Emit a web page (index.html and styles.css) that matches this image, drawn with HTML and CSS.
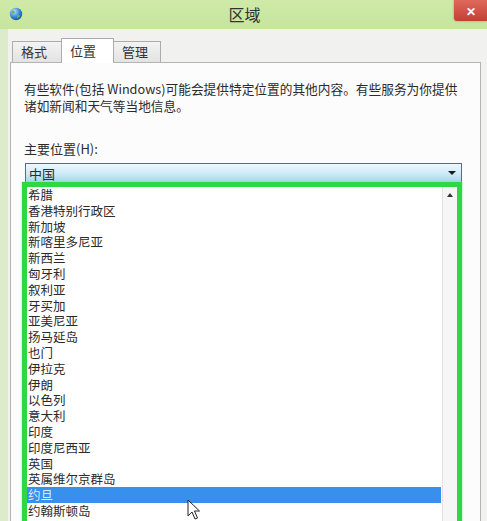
FILE: index.html
```html
<!DOCTYPE html>
<html lang="zh-CN">
<head>
    <meta charset="UTF-8">
    <meta name="viewport" content="width=device-width, initial-scale=1.0">
    <title>区域</title>
    <link rel="stylesheet" href="styles.css">
</head>
<body>
    <div class="window">
        <div class="titlebar">
            <svg class="app-icon" width="14" height="14" viewBox="0 0 14 14">
                <defs>
                    <radialGradient id="g" cx="0.35" cy="0.3" r="0.8">
                        <stop offset="0" stop-color="#bfe3ff"/>
                        <stop offset="0.6" stop-color="#2f7fd0"/>
                        <stop offset="1" stop-color="#1a4f95"/>
                    </radialGradient>
                </defs>
                <circle cx="7" cy="7" r="6.2" fill="url(#g)"/>
                <path d="M3 4 Q5 3 6 5 Q5 7 3 7 Z" fill="#5cb85c"/>
                <path d="M8 8 Q10 7 11 9 Q10 11 8 11 Z" fill="#5cb85c"/>
            </svg>
            <div class="title">区域</div>
            <div class="close">✕</div>
        </div>

        <div class="content">
            <div class="tabs">
                <div class="tab">格式</div>
                <div class="tab active">位置</div>
                <div class="tab">管理</div>
            </div>

            <div class="panel">
                <p class="desc">有些软件(包括 Windows)可能会提供特定位置的其他内容。有些服务为你提供诸如新闻和天气等当地信息。</p>

                <div class="label">主要位置(H):</div>

                <div class="combo">
                    <span>中国</span>
                    <span class="combo-arrow"></span>
                </div>

                <div class="listbox">
                    <ul class="items">
                        <li>希腊</li>
                        <li>香港特别行政区</li>
                        <li>新加坡</li>
                        <li>新喀里多尼亚</li>
                        <li>新西兰</li>
                        <li>匈牙利</li>
                        <li>叙利亚</li>
                        <li>牙买加</li>
                        <li>亚美尼亚</li>
                        <li>扬马延岛</li>
                        <li>也门</li>
                        <li>伊拉克</li>
                        <li>伊朗</li>
                        <li>以色列</li>
                        <li>意大利</li>
                        <li>印度</li>
                        <li>印度尼西亚</li>
                        <li>英国</li>
                        <li>英属维尔京群岛</li>
                        <li class="selected">约旦</li>
                        <li>约翰斯顿岛</li>
                    </ul>
                    <div class="scrollbar">
                        <span class="scroll-up"></span>
                    </div>
                </div>
            </div>
        </div>

        <svg class="cursor" width="13" height="21" viewBox="0 0 13 21">
            <path d="M1 1 L1 17 L5 13 L8 20 L10.5 19 L7.5 12 L12.5 12 Z" fill="#fff" stroke="#222" stroke-width="1" stroke-linejoin="round"/>
        </svg>
    </div>
</body>
</html>
```

FILE: styles.css
```css
* {
    margin: 0;
    padding: 0;
    box-sizing: border-box;
}

body {
    width: 487px;
    height: 521px;
    overflow: hidden;
    background: #f0f0f0;
    font-family: "Noto Sans CJK SC", "Microsoft YaHei", sans-serif;
    color: #2b2b2b;
}

.window {
    position: relative;
    height: 521px;
    border-left: 8px solid #dcecca;
    background: #f1f1f0;
}

.titlebar {
    height: 29px;
    margin-left: -8px;
    background: linear-gradient(#cfeaa8, #c6e59c);
    display: flex;
    align-items: flex-start;
}

.app-icon {
    margin: 7px 0 0 9px;
}

.title {
    flex: 1;
    text-align: center;
    font-size: 16px;
    line-height: 29px;
    color: #333;
    padding-left: 12px;
}

.close {
    width: 33px;
    height: 21px;
    background: linear-gradient(#de6a5c, #c33f33);
    border-bottom-left-radius: 3px;
    color: #fff;
    font-size: 12px;
    font-weight: bold;
    text-align: center;
    line-height: 21px;
    box-shadow: 0 0 2px rgba(120, 30, 20, 0.5);
}

.content {
    padding: 9px 6px 0 2px;
}

.tabs {
    display: flex;
    align-items: flex-end;
    padding-left: 2px;
    position: relative;
    z-index: 1;
}

.tab {
    height: 21px;
    padding: 0 8px;
    font-size: 13px;
    line-height: 20px;
    border: 1px solid #acacac;
    border-bottom: none;
    background: linear-gradient(#f3f3f3, #e3e3e3);
    color: #333;
}

.tab:first-child {
    width: 50px;
}

.tab.active {
    width: 53px;
    height: 25px;
    line-height: 24px;
    background: #fff;
    margin-bottom: -1px;
    margin-left: -1px;
    margin-right: -1px;
}

.tab:last-child {
    width: 48px;
}

.panel {
    height: 470px;
    background: #fcfcfc;
    border: 1px solid #b4b4b4;
    padding: 17px 10px 0 13px;
}

.desc {
    font-size: 12.7px;
    line-height: 17px;
    width: 445px;
}

.label {
    margin-top: 26px;
    font-size: 13px;
    line-height: 17px;
}

.combo {
    margin-top: 6px;
    margin-left: 1px;
    width: 437px;
    height: 20px;
    border: 1px solid #5b6b78;
    background: linear-gradient(#eef8fd, #cde9f7 55%, #a8d6ee);
    display: flex;
    justify-content: space-between;
    align-items: center;
    padding: 0 5px 0 3px;
    font-size: 13px;
}

.combo-arrow {
    width: 0;
    height: 0;
    border-left: 4px solid transparent;
    border-right: 4px solid transparent;
    border-top: 4px solid #1a1a1a;
}

.listbox {
    position: relative;
    margin: -1px 0 0 -2px;
    width: 440px;
    height: 360px;
    border: 5px solid #2ed844;
    box-shadow: 0 0 2px #7ee88a;
    background: #fff;
    display: flex;
}

.items {
    list-style: none;
    flex: 1;
    padding-top: 0;
}

.items li {
    height: 15.8px;
    line-height: 15.8px;
    font-size: 12.5px;
    padding-left: 1px;
    color: #2a2a2a;
}

.items li.selected {
    background: #3790ec;
    color: #dfe9f5;
    margin-right: 1px;
}

.scrollbar {
    width: 15px;
    background: #f6f6f6;
    border-left: 1px solid #e2e2e2;
    display: flex;
    justify-content: center;
}

.scroll-up {
    margin-top: 6px;
    width: 0;
    height: 0;
    border-left: 3px solid transparent;
    border-right: 3px solid transparent;
    border-bottom: 4px solid #333;
}

.cursor {
    position: absolute;
    left: 179px;
    top: 499px;
}
```
